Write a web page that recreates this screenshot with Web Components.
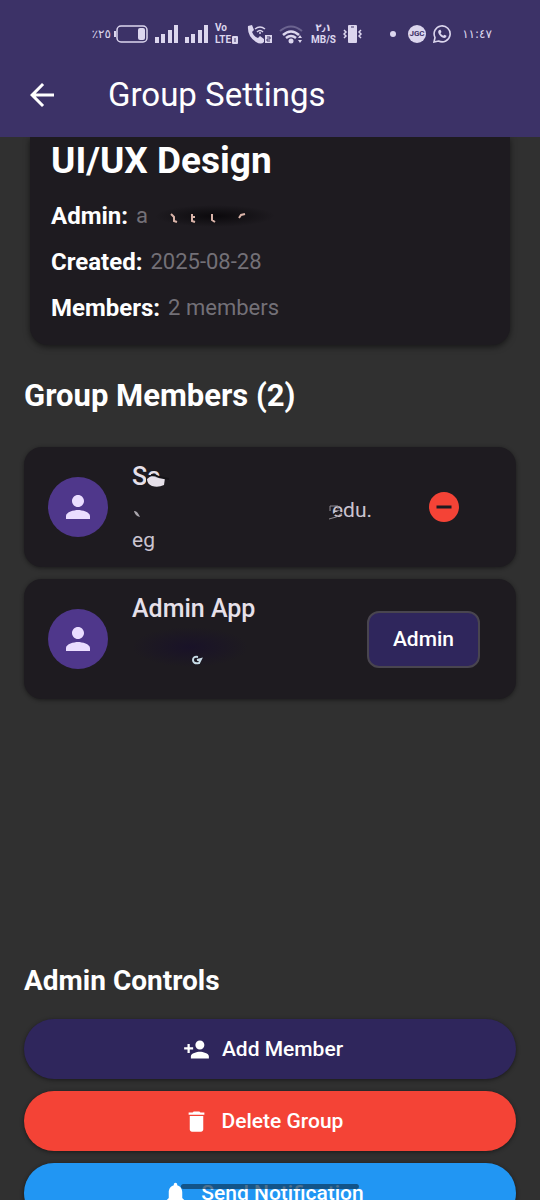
<!DOCTYPE html>
<html lang="en">
<head>
<meta charset="utf-8">
<meta name="viewport" content="width=device-width, initial-scale=1">
<title>Group Settings</title>
<style>
html, body { margin: 0; height: 100%; background: #303030; }
body { font-family: Roboto, "DejaVu Sans", sans-serif; color: #fff; }
</style>
</head>
<body>
<group-settings-page></group-settings-page>
<script>
function define(name, html, setup) {
  const template = document.createElement('template');
  template.innerHTML = html;
  customElements.define(name, class extends HTMLElement {
    connectedCallback() {
      if (this.shadowRoot) return;
      this.attachShadow({ mode: 'open' }).append(template.content.cloneNode(true));
      if (setup) setup(this, this.shadowRoot);
    }
  });
}

const ICONS = {
  back: '<path d="M20 11H7.83l5.59-5.59L12 4l-8 8 8 8 1.41-1.41L7.83 13H20z"/>',
  person: '<path d="M12 12c2.21 0 4-1.79 4-4s-1.79-4-4-4-4 1.79-4 4 1.79 4 4 4zm0 2c-2.67 0-8 1.34-8 4v2h16v-2c0-2.66-5.33-4-8-4z"/>',
  personAdd: '<path d="M15 12c2.21 0 4-1.79 4-4s-1.79-4-4-4-4 1.79-4 4 1.79 4 4 4zm-9-2V7H4v3H1v2h3v3h2v-3h3v-2zm9 4c-2.67 0-8 1.34-8 4v2h16v-2c0-2.66-5.33-4-8-4z"/>',
  remove: '<path d="M12 2C6.48 2 2 6.48 2 12s4.480 10 10 10 10-4.480 10-10S17.520 2 12 2zm5 11H7v-2h10z"/>',
  trash: '<path d="M6 19c0 1.100.9 2 2 2h8c1.100 0 2-.9 2-2V7H6zM19 4h-3.500l-1-1h-5l-1 1H5v2h14z"/>',
  bell: '<path d="M12 22c1.100 0 2-.9 2-2h-4c0 1.100.89 2 2 2zm6-6v-5c0-3.070-1.640-5.640-4.500-6.320V4c0-.83-.67-1.500-1.500-1.500s-1.500.67-1.500 1.500v.68C7.630 5.360 6 7.920 6 11v5l-2 2v1h16v-1z"/>'
};

define('ui-icon', `
<style>
:host { display: block; flex: none; width: var(--icon-size, 24px); height: var(--icon-size, 24px); }
svg { display: block; width: 100%; height: 100%; fill: currentColor; }
</style>
<svg viewBox="0 0 24 24" aria-hidden="true"></svg>`, (host, root) => {
  root.querySelector('svg').innerHTML = ICONS[host.getAttribute('name')];
});

define('signal-bars', `
<style>:host { display: block; } svg { display: block; fill: currentColor; }</style>
<svg width="23" height="18" viewBox="0 0 23 18" aria-hidden="true"><path d="M0 12h4v6H0zM6 9h4v9H6zM13 5h4v13h-4zM19 0h4v18h-4z"/></svg>`);

define('status-bar', `
<style>
:host { display: flex; justify-content: flex-end; align-items: center; gap: 27px; box-sizing: border-box; height: 53px; padding: 15px 48px 0 0; color: #dcd6ee; font-family: Roboto, "DejaVu Sans", sans-serif; }
.group { display: flex; align-items: center; gap: 7px; }
.power { display: flex; align-items: center; gap: 3px; }
svg { display: block; }
.ar { font: 12px/18px "DejaVu Sans", sans-serif; direction: ltr; unicode-bidi: bidi-override; white-space: nowrap; }
.time { min-width: 34px; text-align: right; }
.pct { width: 22px; text-align: right; }
.stack { display: grid; justify-items: center; width: 25px; font-size: 10px; line-height: 12px; font-weight: 700; white-space: nowrap; }
.stack .ar { font-size: 10px; line-height: 12px; font-weight: 700; }
.lte { justify-items: start; }
.row { display: flex; align-items: center; gap: 1px; }
.badge { width: 18px; height: 18px; border-radius: 50%; background: #dcd6ee; color: #3c3267; font-size: 8px; line-height: 18px; font-weight: 700; text-align: center; }
.dot { width: 6px; height: 6px; border-radius: 50%; background: currentColor; margin-right: 5px; }
</style>
<div class="group">
  <div class="power"><span class="ar pct">٪٢٥</span>
  <svg width="34" height="18" fill="none" stroke="currentColor" aria-hidden="true"><rect x="3" y="1" width="30" height="16" rx="4" stroke-width="1.500"/><path d="M1 6v6" stroke-width="2"/><rect x="24" y="3" width="7" height="12" rx="2" fill="currentColor" stroke="none"/></svg></div>
  <signal-bars></signal-bars><signal-bars></signal-bars>
  <div class="stack lte"><div>Vo</div><div class="row">LTE<svg width="6" height="8" aria-hidden="true"><rect width="6" height="8" rx="1" fill="currentColor"/><path d="M3 2v4" stroke="#3c3267"/></svg></div></div>
  <svg width="25" height="19" fill="none" stroke="currentColor" aria-hidden="true"><path d="M1 1l4-1 2 5-2 2q2 5 6 6l2-2 4 3v3q-3 3-8 0Q0 11 1 1z" fill="currentColor" stroke="none"/><path d="M8 4q5-4 10 0M10 7q3-3 6 0" stroke-width="1.500"/><circle cx="13" cy="8" r="1" fill="currentColor" stroke="none"/><rect x="18" y="10" width="7" height="8" fill="currentColor" stroke="none"/><path d="M20 12h3v2h-3v2h3" stroke="#3c3267"/></svg>
  <svg width="25" height="19" fill="none" stroke="currentColor" aria-hidden="true"><path d="M1 6q11-9 22 0" stroke-width="2" opacity=".3"/><path d="M4 10q8-7 16 0M7 13q5-4 10 0" stroke-width="2.500"/><circle cx="12" cy="16" r="2.500" fill="currentColor" stroke="none"/><path d="M19 13l2-3 2 3zM19 15l2 3 2-3z" fill="currentColor" stroke="none"/></svg>
  <div class="stack"><div class="ar">٢٫١</div><div>MB/S</div></div>
  <svg width="20" height="20" fill="none" stroke="currentColor" aria-hidden="true"><rect x="5" y="1" width="9" height="18" rx="1" fill="currentColor" stroke="none"/><path d="M8 3h3" stroke="#3c3267"/><path d="M1 6l2 2-2 2 2 2-2 2M18 6l-2 2 2 2-2 2 2 2" stroke-width="1.500"/></svg>
</div>
<div class="group">
  <span class="dot"></span><span class="badge">JGC</span>
  <svg width="18" height="18" viewBox="0 0 18 18" fill="none" stroke="currentColor" aria-hidden="true"><path d="M1 17l1-4.500A8 8 0 1 1 5.500 16z" stroke-width="1.600"/><path d="M6 5l1.500-.2L8.500 7l-1 1.200q1 1.800 2.800 2.600l1.100-1.100 2.100 1q.2 2-2 2.300C8 12.500 5 9 5.200 6.500z" fill="currentColor" stroke="none"/></svg>
  <span class="ar time">١١:٤٧</span>
</div>`);

define('app-bar', `
<style>
:host { display: block; flex: none; background: #3c3267; position: relative; z-index: 1; }
nav { display: flex; align-items: center; height: 84px; padding: 0 24px; gap: 48px; }
button { border: 0; padding: 0; background: none; color: #fff; --icon-size: 36px; }
h1 { margin: 0; font-size: 33px; line-height: 42px; font-weight: 400; }
</style>
<status-bar></status-bar>
<nav><button aria-label="Back"><ui-icon name="back"></ui-icon></button><h1><slot></slot></h1></nav>`);

define('info-row', `
<style>
:host { display: flex; align-items: center; gap: 8px; font-size: 22px; line-height: 30px; color: #737077; }
dt { font-size: 24px; font-weight: 700; color: #fff; } dd { margin: 0; }
</style>
<dt><slot name="label"></slot></dt><dd><slot></slot></dd>`);

define('group-card', `
<style>
:host { display: block; margin: 0 6px; padding: 2px 21px 22px; border-radius: 0 0 18px 18px; background: #1e1b20; box-shadow: 0 2px 6px #0008; }
h2 { margin: 0 0 18px; font-size: 37px; line-height: 44px; font-weight: 700; }
dl { margin: 0; display: grid; gap: 16px; }
svg { display: inline-block; vertical-align: middle; }
</style>
<h2>UI/UX Design</h2>
<dl>
<info-row><span slot="label">Admin:</span>a <svg width="124" height="24" aria-hidden="true"><defs><radialGradient id="g"><stop offset="0" stop-color="#0b090c"/><stop offset="1" stop-color="#0b090c" stop-opacity="0"/></radialGradient></defs><ellipse cx="62" cy="11" rx="60" ry="11" fill="url(#g)"/><path d="M18 9l3 3v4l3 1M39 9v7l3 1M38 12h4M59 9v6l3 2M86 13l2-3 4-1" fill="none" stroke="#d9b3a8" stroke-width="2"/></svg></info-row>
<info-row><span slot="label">Created:</span>2025-08-28</info-row>
<info-row><span slot="label">Members:</span>2 members</info-row>
</dl>`);

define('member-card', `
<style>
:host { display: flex; align-items: center; box-sizing: border-box; min-height: 120px; padding: 0 36px 0 24px; border-radius: 18px; background: #1e1b20; box-shadow: 0 1px 4px #0007; }
.avatar { display: grid; place-items: center; flex: none; width: 60px; height: 60px; border-radius: 50%; background: #4f378b; color: #eaddff; --icon-size: 36px; }
.text { flex: 1; align-self: flex-start; padding: 12px 0 0 24px; }
h3 { margin: 0; font-size: 25px; line-height: 36px; font-weight: 500; color: #e6e0e9; }
.detail { font-size: 21px; line-height: 30px; color: #cac4d0; }
</style>
<div class="avatar"><ui-icon name="person"></ui-icon></div>
<div class="text"><h3><slot name="name"></slot></h3><div class="detail"><slot></slot></div></div>
<slot name="action"></slot>`);

define('remove-button', `
<style>
:host { display: block; margin-right: 18px; }
button { display: block; border: 0; padding: 0; background: none; color: #f44336; --icon-size: 36px; }
</style>
<button aria-label="Remove member"><ui-icon name="remove"></ui-icon></button>`);

define('role-chip', `
<style>
:host { display: block; padding: 12px 24px; border: 2px solid #49454f; border-radius: 12px; background: #2f265c; font-size: 21px; line-height: 29px; font-weight: 500; }
</style><slot></slot>`);

define('email-fragment', `
<style>
:host { display: block; }
.line { display: flex; justify-content: space-between; align-items: center; max-width: 240px; }
.end { position: relative; }
svg { display: block; }
.end svg { position: absolute; left: -3px; top: 6px; }
</style>
<div class="line"><svg width="12" height="24" aria-hidden="true"><path d="M2 13q3-1 6 6-5-1-6-6z" fill="#aaa6ad"/></svg><span class="end">edu.<svg width="18" height="20" aria-hidden="true"><path d="M1 5h8v3M1 5v5M0 18q8-1 13-6" fill="none" stroke="#8f8b92"/><path d="M2 15l9-5" stroke="#1e1b20" stroke-width="2"/></svg></span></div>
<div>eg</div>`);

define('name-fragment', `
<style>
:host { display: flex; align-items: center; }
.cut { position: relative; }
svg { position: absolute; left: 14px; top: 5px; }
</style>
<span class="cut">Sa<svg width="32" height="28" aria-hidden="true"><path d="M0 13h18v12H0z" fill="#1e1b20"/><path d="M1 15q4-4 8-2l10 1-1 7q-6 3-12 1-5-2-5-7z" fill="#e6e0e9"/><path d="M5 11q5 0 8 2l10 2" fill="none" stroke="#151317" stroke-width="2"/></svg></span>`);

define('smudge-mark', `
<style>:host { display: block; } svg { display: block; }</style>
<svg width="160" height="48" aria-hidden="true"><defs><radialGradient id="s"><stop offset="0" stop-color="#191228"/><stop offset="1" stop-color="#191228" stop-opacity="0"/></radialGradient></defs><ellipse cx="58" cy="20" rx="58" ry="20" fill="url(#s)"/><path d="M66 30q-5-1-5 3t6 3l2-4-4 1" fill="none" stroke="#c7dbe6" stroke-width="2"/></svg>`);

define('action-button', `
<style>
:host { display: block; }
button { display: flex; align-items: center; justify-content: center; gap: 12px; width: 100%; height: 60px; padding: 0 32px 0 18px; border: 0; border-radius: 30px; background: var(--fill); color: #fff; font: 500 21px/30px Roboto, sans-serif; box-shadow: 0 1px 4px #0007; --icon-size: 27px; }
</style>
<button><ui-icon></ui-icon><span><slot></slot></span></button>`, (host, root) => {
  root.querySelector('ui-icon').replaceWith(Object.assign(document.createElement('template'), { innerHTML: '<ui-icon name="' + host.getAttribute('icon') + '"></ui-icon>' }).content);
});

define('group-settings-page', `
<style>
:host { display: flex; flex-direction: column; height: 100vh; overflow: hidden; position: relative; }
main { flex: 1; min-height: 0; overflow: auto; scrollbar-width: none; padding: 0 24px; }
h2 { margin: 0; font-weight: 700; }
.members-title { font-size: 31px; line-height: 36px; padding: 33px 0; }
.members { display: grid; gap: 12px; align-content: start; min-height: 516px; }
.controls { display: grid; gap: 12px; padding-bottom: 24px; }
.controls h2 { font-size: 28px; line-height: 36px; padding-bottom: 8px; }
.add { --fill: #2f265c; } .delete { --fill: #f44336; } .notify { --fill: #2196f3; }
.gesture { position: absolute; bottom: 11px; left: 50%; transform: translateX(-50%); width: 33%; height: 5px; border-radius: 3px; background: #0d3a60b8; }
</style>
<app-bar>Group Settings</app-bar>
<main>
<group-card></group-card>
<h2 class="members-title">Group Members (2)</h2>
<section class="members">
<member-card><name-fragment slot="name"></name-fragment><email-fragment></email-fragment><remove-button slot="action"></remove-button></member-card>
<member-card><span slot="name">Admin App</span><smudge-mark></smudge-mark><role-chip slot="action">Admin</role-chip></member-card>
</section>
<section class="controls">
<h2>Admin Controls</h2>
<action-button class="add" icon="personAdd">Add Member</action-button>
<action-button class="delete" icon="trash">Delete Group</action-button>
<action-button class="notify" icon="bell">Send Notification</action-button>
</section>
</main>
<div class="gesture"></div>`);
</script>
</body>
</html>
